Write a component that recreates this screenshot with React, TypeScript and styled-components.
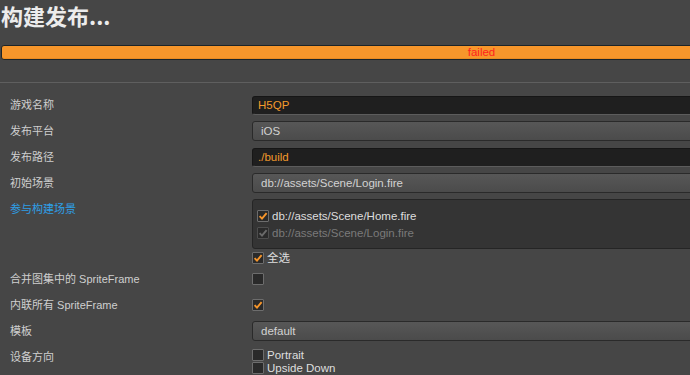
import React from "react";
import styled, {createGlobalStyle} from "styled-components";

const GlobalStyle = createGlobalStyle`
  html, body {
    margin: 0;
    padding: 0;
    background: #464646;
    overflow: hidden;
  }
  body {
    font-family: "Liberation Sans", "Noto Sans CJK SC", sans-serif;
    font-size: 11.5px;
    color: #cfcfcf;
  }
`;

const Page = styled.div`
  width: 962px;
  display: flex;
  flex-direction: column;
`;

const Title = styled.h1`
  margin: 0;
  padding: 0 0 0 1px;
  height: 32px;
  line-height: 30px;
  font-size: 22px;
  font-weight: 700;
  color: #ececec;
  font-family: "Noto Sans CJK SC", "Liberation Sans", sans-serif;
`;

const ProgressBar = styled.div`
  margin: 13px 0 0 1px;
  height: 13px;
  border: 1px solid #1c2429;
  border-radius: 3px;
  background: #f7962b;
  box-shadow: inset 0 -1px 0 #e98a22;
  display: flex;
  align-items: center;
  justify-content: center;
  color: #ff1f1f;
  font-size: 11.5px;
  line-height: 13px;
`;

const Divider = styled.div`
  margin-top: 22px;
  height: 1px;
  background: #5f5f5f;
`;

const Form = styled.div`
  display: grid;
  grid-template-columns: 242px 1fr;
  padding: 9px 10px 0 10px;
`;

const Label = styled.div<{$blue?: boolean}>`
  height: 26px;
  line-height: 26px;
  font-size: 11px;
  color: ${p => (p.$blue ? "#2e9fe6" : "#cfcfcf")};
  white-space: nowrap;
`;

const Cell = styled.div`
  min-height: 26px;
  display: flex;
  flex-direction: column;
  justify-content: center;
`;

const TopCell = styled.div`
  display: flex;
  flex-direction: column;
  padding-top: 3px;
  padding-bottom: 2px;
`;

const StackCell = styled.div`
  display: flex;
  flex-direction: column;
  gap: 1px;
  padding-top: 5px;
`;

const TextInput = styled.div`
  height: 17px;
  line-height: 17px;
  padding-left: 5px;
  background: #1f1f1f;
  border: 1px solid #161616;
  border-bottom-color: #5c5c5c;
  border-radius: 3px;
  color: #f39a2c;
`;

const Select = styled.div`
  height: 18px;
  line-height: 18px;
  padding-left: 8px;
  background: linear-gradient(#575757, #4b4b4b);
  border: 1px solid #2a2a2a;
  border-radius: 3px;
  color: #d2d2d2;
`;

const SceneList = styled.div`
  height: 40px;
  padding: 4px 4px;
  background: #343434;
  border: 1px solid #252525;
  border-radius: 3px;
  display: flex;
  flex-direction: column;
  gap: 5px;
  justify-content: center;
`;

const CheckRow = styled.div<{$muted?: boolean}>`
  display: flex;
  align-items: center;
  gap: 3px;
  height: 12px;
  line-height: 12px;
  color: ${p => (p.$muted ? "#7a7a7a" : "#dedede")};
`;

const Box = styled.span<{$muted?: boolean}>`
  width: 10px;
  height: 10px;
  flex: none;
  background: #2a2a2a;
  border: 1px solid ${p => (p.$muted ? "#4e4e4e" : "#6d6d6d")};
  border-radius: 1px;
  display: flex;
  align-items: center;
  justify-content: center;
`;

const CheckSpacer = styled.div`
  margin-top: 3px;
`;

function CheckBox({checked, muted}: {checked?: boolean; muted?: boolean}) {
  return (
    <Box $muted={muted}>
      {checked && (
        <svg width="10" height="10" viewBox="0 0 10 10">
          <path d="M1.6 5.2 L4 7.6 L8.6 2.2" fill="none" stroke={muted ? "#6a6a6a" : "#f7962b"} strokeWidth="1.9" />
        </svg>
      )}
    </Box>
  );
}

function App() {
  return (
    <>
      <GlobalStyle />
      <Page>
        <Title>构建发布...</Title>
        <ProgressBar>failed</ProgressBar>
        <Divider />
        <Form>
          <Label>游戏名称</Label>
          <Cell><TextInput>H5QP</TextInput></Cell>

          <Label>发布平台</Label>
          <Cell><Select>iOS</Select></Cell>

          <Label>发布路径</Label>
          <Cell><TextInput>./build</TextInput></Cell>

          <Label>初始场景</Label>
          <Cell><Select>db://assets/Scene/Login.fire</Select></Cell>

          <Label $blue>参与构建场景</Label>
          <TopCell>
            <SceneList>
              <CheckRow><CheckBox checked />db://assets/Scene/Home.fire</CheckRow>
              <CheckRow $muted><CheckBox checked muted />db://assets/Scene/Login.fire</CheckRow>
            </SceneList>
            <CheckSpacer>
              <CheckRow><CheckBox checked />全选</CheckRow>
            </CheckSpacer>
          </TopCell>

          <Label>合并图集中的 SpriteFrame</Label>
          <Cell><CheckRow><CheckBox /></CheckRow></Cell>

          <Label>内联所有 SpriteFrame</Label>
          <Cell><CheckRow><CheckBox checked /></CheckRow></Cell>

          <Label>模板</Label>
          <Cell><Select>default</Select></Cell>

          <Label>设备方向</Label>
          <StackCell>
            <CheckRow><CheckBox />Portrait</CheckRow>
            <CheckRow><CheckBox />Upside Down</CheckRow>
          </StackCell>
        </Form>
      </Page>
    </>
  );
}

export default App;
